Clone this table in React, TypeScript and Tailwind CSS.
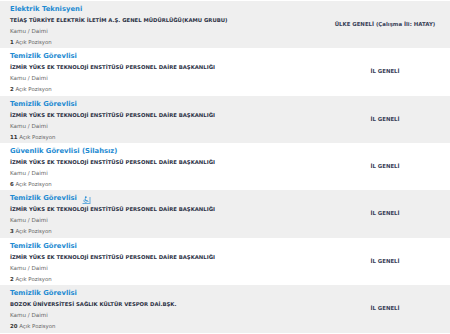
import React from "react";

type Row = {
  title: string;
  org: string;
  count: string;
  loc: string;
  icon?: boolean;
  h: string;
};

const rows: Row[] = [
  { title: "Elektrik Teknisyeni", org: "TEİAŞ TÜRKİYE ELEKTRİK İLETİM A.Ş. GENEL MÜDÜRLÜĞÜ(KAMU GRUBU)", count: "1", loc: "ÜLKE GENELİ (Çalışma İli: HATAY)", h: "h-[47px]" },
  { title: "Temizlik Görevlisi", org: "İZMİR YÜKS EK TEKNOLOJİ ENSTİTÜSÜ PERSONEL DAİRE BAŞKANLIĞI", count: "2", loc: "İL GENELİ", h: "h-[48px]" },
  { title: "Temizlik Görevlisi", org: "İZMİR YÜKS EK TEKNOLOJİ ENSTİTÜSÜ PERSONEL DAİRE BAŞKANLIĞI", count: "11", loc: "İL GENELİ", h: "h-[47px]" },
  { title: "Güvenlik Görevlisi (Silahsız)", org: "İZMİR YÜKS EK TEKNOLOJİ ENSTİTÜSÜ PERSONEL DAİRE BAŞKANLIĞI", count: "6", loc: "İL GENELİ", h: "h-[47px]" },
  { title: "Temizlik Görevlisi", org: "İZMİR YÜKS EK TEKNOLOJİ ENSTİTÜSÜ PERSONEL DAİRE BAŞKANLIĞI", count: "3", loc: "İL GENELİ", icon: true, h: "h-[48px]" },
  { title: "Temizlik Görevlisi", org: "İZMİR YÜKS EK TEKNOLOJİ ENSTİTÜSÜ PERSONEL DAİRE BAŞKANLIĞI", count: "2", loc: "İL GENELİ", h: "h-[47px]" },
  { title: "Temizlik Görevlisi", org: "BOZOK ÜNİVERSİTESİ SAĞLIK KÜLTÜR VESPOR DAİ.BŞK.", count: "20", loc: "İL GENELİ", h: "h-[48px]" },
];

function Accessible() {
  return (
    <svg width="9" height="8" viewBox="0 0 9 8" className="ml-[5px] mt-[2px]">
      <circle cx="3.8" cy="1.2" r="0.9" fill="#2b8fd6" />
      <path d="M3.3 2.3 L3.3 4.6 L5.4 4.6 L6.2 6" stroke="#2b8fd6" strokeWidth="0.9" fill="none" />
      <path d="M2.3 3.6 A1.7 1.7 0 1 0 4.9 5.8" stroke="#2b8fd6" strokeWidth="0.7" fill="none" />
      <path d="M8 1 L8 7" stroke="#2b8fd6" strokeWidth="0.7" />
      <path d="M0.5 7.5 L8.5 7.5" stroke="#2b8fd6" strokeWidth="0.7" />
    </svg>
  );
}

export default function App() {
  return (
    <div className="w-[450px] h-[334px] overflow-hidden bg-white pt-[1px]" style={{ fontFamily: '"DejaVu Sans", Verdana, sans-serif' }}>
      {rows.map((r, i) => (
        <div key={i} className={`${r.h} flex ${i % 2 === 0 ? "bg-[#efefef]" : "bg-white"}`}>
          <div className="w-[320px] pl-[10px] pt-[3px] flex flex-col">
            <div className="h-[11px] flex items-center">
              <span className="text-[6.8px] font-bold text-[#1e8bd2] leading-none whitespace-nowrap">{r.title}</span>
              {r.icon && <Accessible />}
            </div>
            <div className="h-[11px] flex items-center">
              <span className="text-[5.3px] font-bold text-[#2d3346] leading-none whitespace-nowrap">{r.org}</span>
            </div>
            <div className="h-[11px] flex items-center">
              <span className="text-[5.6px] text-[#666] leading-none">Kamu / Daimi</span>
            </div>
            <div className="h-[11px] flex items-center">
              <span className="text-[5.4px] text-[#666] leading-none">
                <span className="font-bold text-[#333]">{r.count}</span> Açık Pozisyon
              </span>
            </div>
          </div>
          <div className="w-[130px] flex items-center justify-center">
            <span className="text-[5.4px] font-bold text-[#3a4258] leading-none whitespace-nowrap">{r.loc}</span>
          </div>
        </div>
      ))}
    </div>
  );
}
